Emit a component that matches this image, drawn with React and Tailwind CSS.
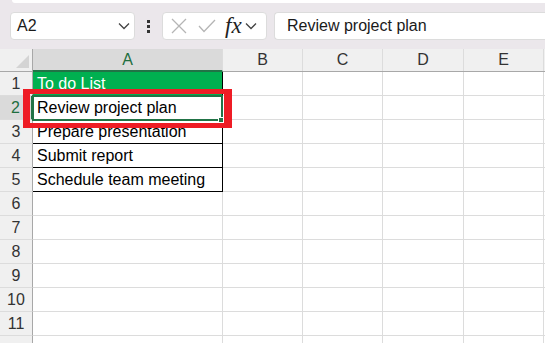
import React from "react";

const cols = [
  { name: "A", w: "w-[190px]" },
  { name: "B", w: "w-[80px]" },
  { name: "C", w: "w-[80px]" },
  { name: "D", w: "w-[81px]" },
  { name: "E", w: "w-[80px]" },
];

const tasks = ["To do List", "Review project plan", "Prepare presentation", "Submit report", "Schedule team meeting"];

function Chevron({ className }) {
  return (
    <svg className={className} width="12" height="8" viewBox="0 0 12 8" fill="none">
      <path d="M1 1.5 L6 6.5 L11 1.5" stroke="#444" strokeWidth="1.3" />
    </svg>
  );
}

export default function App() {
  const rows = Array.from({ length: 12 }, (_, i) => i + 1);

  return (
    <div className="w-[545px] h-[343px] overflow-hidden bg-white relative" style={{ fontFamily: "'Liberation Sans', Arial, sans-serif" }}>
      {/* toolbar */}
      <div className="h-[49px] bg-[#ebe7eb] relative">
        <div className="absolute left-[12px] right-0 top-0 h-[3px] bg-white rounded-bl-[3px]" />
        <div className="flex items-start pt-[12px] h-full">
          <div className="ml-[10px] w-[125px] h-[28px] bg-white rounded-[4px] border border-[#dcdcdc] flex items-center justify-between pl-[6px] pr-[4px]">
            <span className="text-[16px] text-[#1a1a1a]">A2</span>
            <Chevron />
          </div>
          <div className="w-[27px] h-[28px] flex flex-col items-center justify-center gap-[2px]">
            <span className="w-[3px] h-[3px] bg-[#333]" />
            <span className="w-[3px] h-[3px] bg-[#333]" />
            <span className="w-[3px] h-[3px] bg-[#333]" />
          </div>
          <div className="w-[105px] h-[28px] bg-white rounded-[4px] border border-[#dcdcdc] flex items-center">
            <svg className="ml-[8px]" width="16" height="16" viewBox="0 0 16 16">
              <path d="M1 1 L15 15 M15 1 L1 15" stroke="#b5b5b5" strokeWidth="1.3" />
            </svg>
            <svg className="ml-[11px]" width="18" height="14" viewBox="0 0 18 14">
              <path d="M1 7 L6 12.5 L17 1" stroke="#b5b5b5" strokeWidth="1.3" fill="none" />
            </svg>
            <span className="ml-[9px] text-[23px] italic text-[#222] leading-none -mt-[2px]" style={{ fontFamily: "'Liberation Serif', serif" }}>fx</span>
            <Chevron className="ml-[3px]" />
          </div>
          <div className="ml-[7px] flex-1 h-[28px] bg-white rounded-l-[4px] border border-r-0 border-[#dcdcdc] flex items-center pl-[12px]">
            <span className="text-[16px] text-[#1a1a1a]">Review project plan</span>
          </div>
        </div>
      </div>

      {/* grid */}
      <div className="relative">
        {/* column headers */}
        <div className="flex h-[23px] bg-[#f0f0f0] border-b border-[#a8a8a8]">
          <div className="w-[33px] shrink-0 border-r border-[#a8a8a8] relative">
            <svg className="absolute right-[3px] bottom-[3px]" width="13" height="13" viewBox="0 0 13 13">
              <path d="M13 0 L13 13 L0 13 Z" fill="#d4d4d4" />
            </svg>
          </div>
          {cols.map((c) => (
            <div
              key={c.name}
              className={`${c.w} shrink-0 flex items-center justify-center text-[16px] border-r border-[#dcdcdc] ${
                c.name === "A" ? "bg-[#dadada] text-[#1e6e3e] border-b-2 border-b-[#217346] -mb-px" : "text-[#333]"
              }`}
            >
              {c.name}
            </div>
          ))}
          <div className="flex-1" />
        </div>

        {rows.map((r) => (
          <div key={r} className="flex h-[24px]">
            <div
              className={`w-[33px] shrink-0 flex items-center justify-center text-[16px] border-r border-b ${
                r === 2 ? "bg-[#dadada] text-[#1e6e3e] border-r-[#217346] border-r-2 border-b-[#dcdcdc]" : "bg-[#f0f0f0] text-[#333] border-r-[#a8a8a8] border-b-[#dcdcdc]"
              }`}
            >
              {r <= 11 ? r : null}
            </div>
            {cols.map((c) => {
              const isA = c.name === "A";
              const task = isA && r <= 5 ? tasks[r - 1] : null;
              let cls = "border-r border-b border-[#dcdcdc]";
              if (isA && r === 1) cls = "bg-[#00b050] text-white border-r border-b border-black";
              else if (isA && r <= 5) cls = "border-r border-b border-black text-black";
              return (
                <div key={c.name} className={`${c.w} shrink-0 flex items-end pb-[1px] pl-[4px] text-[16px] leading-[20px] whitespace-nowrap overflow-hidden ${cls}`}>
                  {task}
                </div>
              );
            })}
            <div className="flex-1 border-b border-[#dcdcdc]" />
          </div>
        ))}

        {/* selection on A2 */}
        <div className="absolute left-[32px] top-[46px] w-[191px] h-[26px] border-2 border-[#217346]" />
        <div className="absolute left-[218px] top-[68px] w-[6px] h-[6px] bg-[#217346] border border-white" />

        {/* red highlight */}
        <div className="absolute left-[23px] top-[40px] w-[209px] h-[39px] border-[#ee1c25] border-l-[7px] border-r-[8px] border-t-[5px] border-b-[5px]" />
      </div>
    </div>
  );
}
